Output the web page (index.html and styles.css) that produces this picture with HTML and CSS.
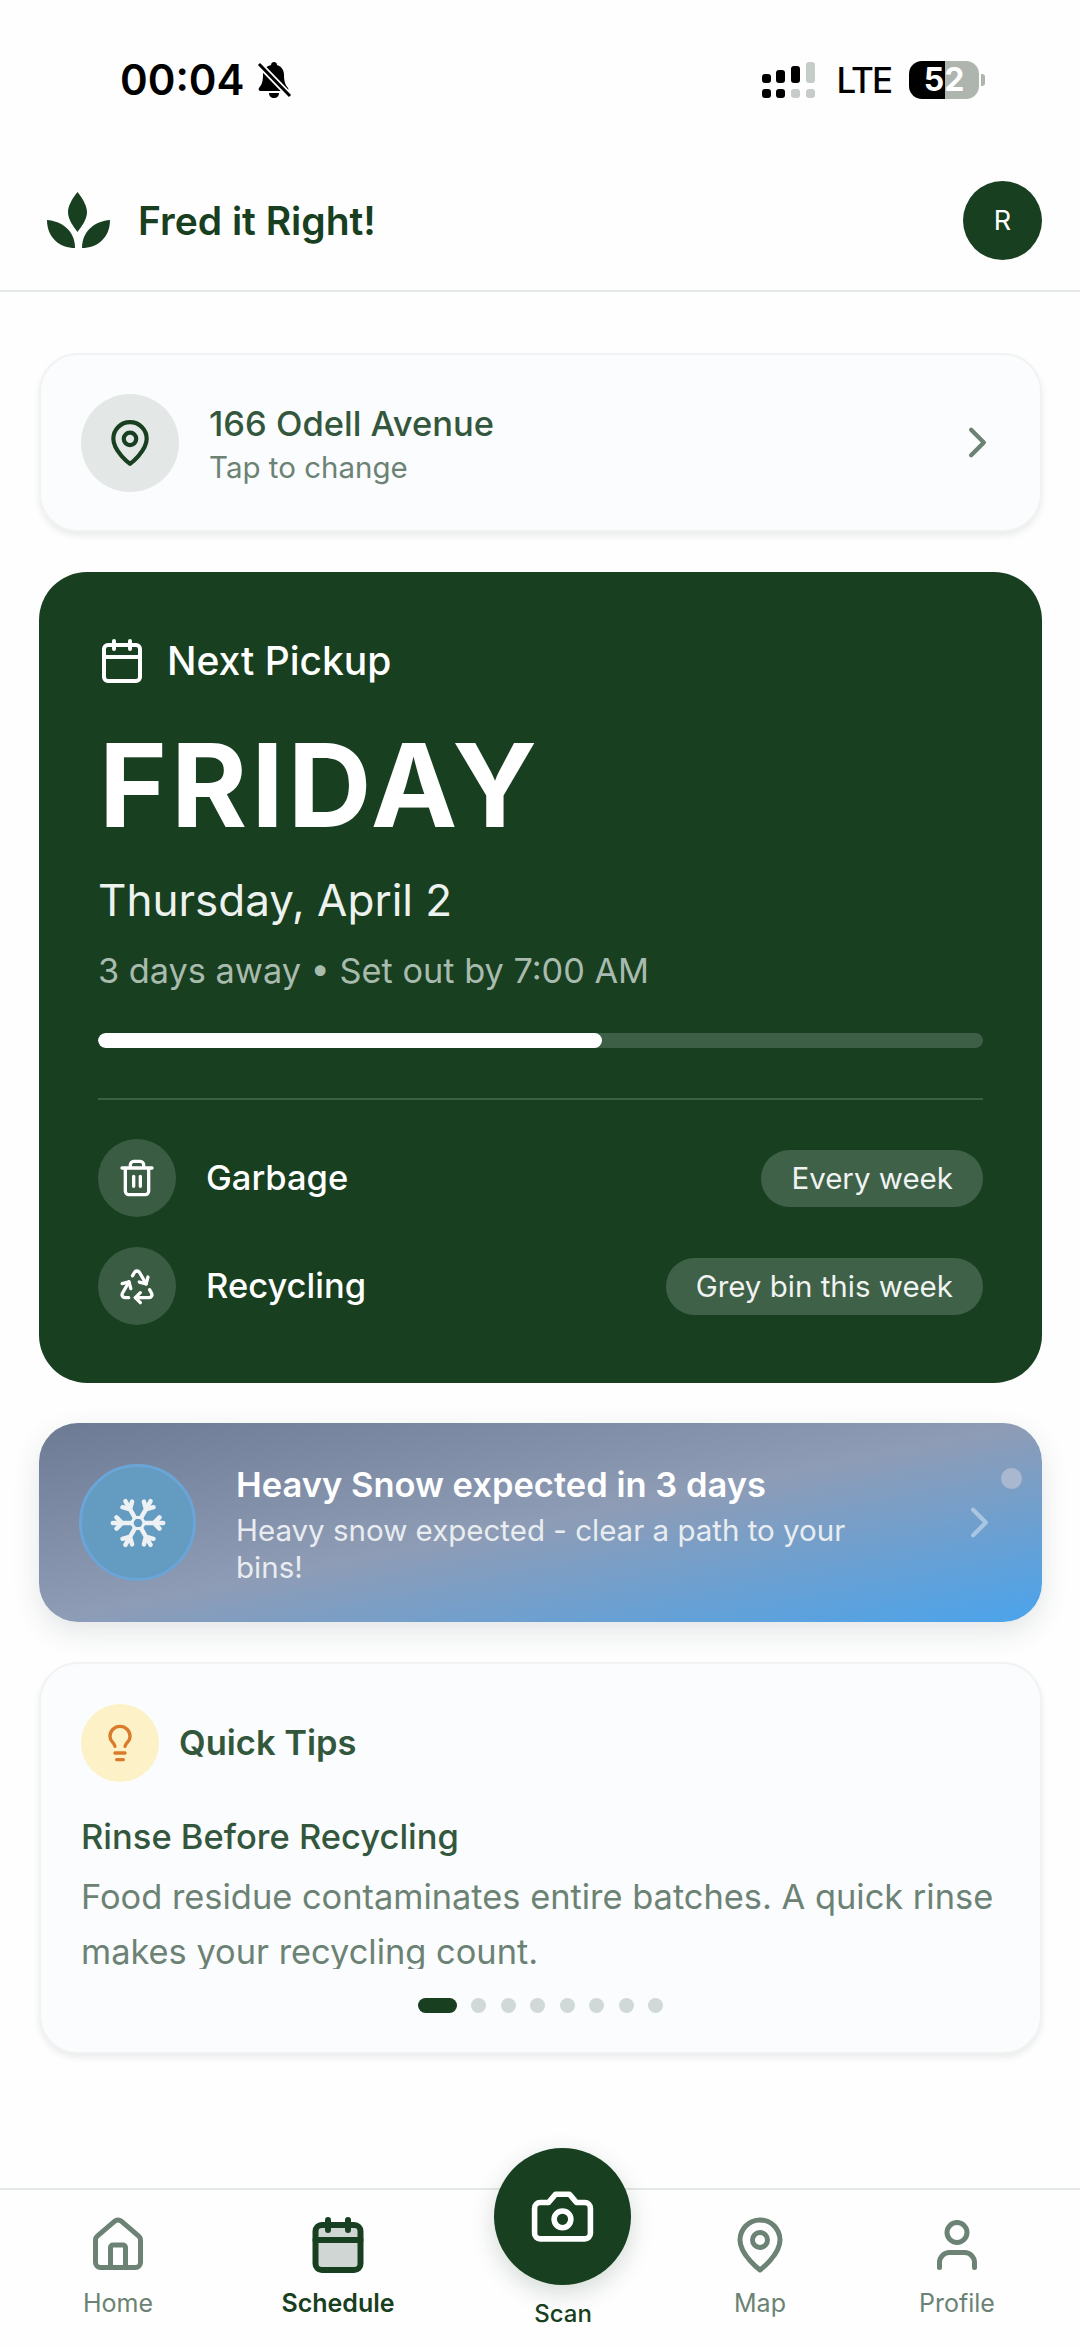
FILE: index.html
```html
<!DOCTYPE html>
<html lang="en">
<head>
<meta charset="utf-8">
<title>Fred it Right!</title>
<link rel="stylesheet" href="styles.css">
</head>
<body>
<div class="app">
  <div class="status">
    <div class="status-left">
      <span class="time">00:04</span>
      <svg class="bell" viewBox="0 0 36 38"><path d="M18 1c2 0 3 1.400 3 3 5 1.500 7 5.500 7 10 0 7 1.500 10 4 13 1 1.500 0 3-1.500 3H4.500C3 30 2 28.500 3 27c2.500-3 4-6 4-13 0-4.500 2-8.500 8-10 0-1.600 1-3 3-3zM13 32h10c0 3-2 5-5 5s-5-2-5-5z" fill="#000"/><path d="M3 3l31 32" stroke="#fff" stroke-width="6.500"/><path d="M3 3l31 32" stroke="#000" stroke-width="3"/></svg>
    </div>
    <div class="status-right">
      <svg class="signal" viewBox="0 0 54 36"><g fill="#000"><rect x="0" y="12" width="9" height="9" rx="3"/><rect x="0" y="27" width="9" height="9" rx="3"/><rect x="14" y="8" width="9" height="13" rx="3"/><rect x="14" y="27" width="9" height="9" rx="3"/><rect x="29" y="4" width="9" height="17" rx="3"/></g><g fill="#c6ccc8"><rect x="29" y="27" width="9" height="9" rx="3"/><rect x="44" y="0" width="9" height="21" rx="3"/><rect x="44" y="27" width="9" height="9" rx="3"/></g></svg>
      <span class="lte">LTE</span>
      <span class="battery">52</span>
      <span class="nib"></span>
    </div>
  </div>

  <header class="header">
    <div class="brand">
      <svg class="logo" viewBox="0 0 66 58"><g fill="#183f20"><path d="M31.500 0C25 8 22 15 22 20c0 8 6 15 9.500 20 3.500-5 9.500-12 9.500-20 0-5-3-12-9.500-20z"/><path d="M1 28c14 1 28 10 28 28C14 56 1 46 1 28z"/><path d="M64 28c-14 1-28 10-28 28 15 0 28-10 28-28z"/></g></svg>
      <span class="brand-name">Fred it Right!</span>
    </div>
    <div class="avatar">R</div>
  </header>

  <main class="main">
    <section class="card location">
      <div class="loc-icon">
        <svg class="i50" viewBox="0 0 24 24"><path d="M20 10c0 6-8 12-8 12s-8-6-8-12a8 8 0 0 1 16 0Z"/><circle cx="12" cy="10" r="3"/></svg>
      </div>
      <div class="loc-text">
        <div class="loc-title">166 Odell Avenue</div>
        <div class="loc-sub">Tap to change</div>
      </div>
      <svg class="chev" viewBox="0 0 24 24"><path d="m9 18 6-6-6-6"/></svg>
    </section>

    <section class="pickup">
      <div class="pickup-head">
        <svg class="i48" viewBox="0 0 24 24"><rect x="3" y="4" width="18" height="18" rx="2"/><path d="M16 2v4M8 2v4M3 10h18"/></svg>
        <span>Next Pickup</span>
      </div>
      <div class="day">FRIDAY</div>
      <div class="date">Thursday, April 2</div>
      <div class="away">3 days away • Set out by 7:00 AM</div>
      <div class="track"><div class="fill" style="width:57%"></div></div>
      <div class="rule"></div>
      <div class="rows">
        <div class="bin">
          <span class="bin-icon"><svg class="i40" viewBox="0 0 24 24"><path d="M3 6h18M19 6v14c0 1-1 2-2 2H7c-1 0-2-1-2-2V6M8 6V4c0-1 1-2 2-2h4c1 0 2 1 2 2v2M10 11v6M14 11v6"/></svg></span>
          <span class="bin-name">Garbage</span>
          <span class="pill">Every week</span>
        </div>
        <div class="bin">
          <span class="bin-icon"><svg class="i40" viewBox="0 0 24 24"><path d="M7 19H4.815a1.830 1.830 0 0 1-1.570-.881 1.785 1.785 0 0 1-.004-1.784L7.196 9.500"/><path d="M11 19h8.203a1.830 1.830 0 0 0 1.556-.890 1.784 1.784 0 0 0 0-1.775l-1.226-2.120"/><path d="m14 16-3 3 3 3"/><path d="M8.293 13.596 7.196 9.500 3.100 10.598"/><path d="m9.344 5.811 1.093-1.892A1.830 1.830 0 0 1 11.985 3a1.784 1.784 0 0 1 1.546.888l3.943 6.843"/><path d="m13.378 9.633 4.096 1.098 1.097-4.096"/></svg></span>
          <span class="bin-name">Recycling</span>
          <span class="pill">Grey bin this week</span>
        </div>
      </div>
    </section>

    <section class="weather">
      <div class="snow-icon">
        <svg class="snowflake" viewBox="-30 -30 60 60">
          <defs><g id="arm"><path d="M7 0H27M17 0l6-6M17 0l6 6"/></g></defs>
          <path class="hex" d="M7 0 3.500 6-3.500 6-7 0-3.500-6 3.500-6Z"/>
          <use href="#arm"/>
          <use href="#arm" transform="rotate(60)"/>
          <use href="#arm" transform="rotate(120)"/>
          <use href="#arm" transform="rotate(180)"/>
          <use href="#arm" transform="rotate(240)"/>
          <use href="#arm" transform="rotate(300)"/>
        </svg>
      </div>
      <div class="weather-text">
        <div class="weather-title">Heavy Snow expected in 3 days</div>
        <div class="weather-sub">Heavy snow expected - clear a path to your bins!</div>
      </div>
      <svg class="chev chev-light" viewBox="0 0 24 24"><path d="m9 18 6-6-6-6"/></svg>
      <span class="weather-dot"></span>
    </section>

    <section class="card tips">
      <div class="tips-head">
        <span class="bulb"><svg class="i40" viewBox="0 0 24 24"><path d="M15 14c.2-1 .7-1.700 1.500-2.500 1-.9 1.500-2.200 1.500-3.500A6 6 0 0 0 6 8c0 1 .2 2.200 1.500 3.500.7.7 1.300 1.500 1.500 2.500M9 18h6M10 22h4"/></svg></span>
        <span class="tips-title">Quick Tips</span>
      </div>
      <div class="tip-name">Rinse Before Recycling</div>
      <div class="tip-clip"><p class="tip-body">Food residue contaminates entire batches. A quick rinse makes your recycling count.</p></div>
      <div class="dots">
        <span class="dot dot-on"></span><span class="dot"></span><span class="dot"></span><span class="dot"></span><span class="dot"></span><span class="dot"></span><span class="dot"></span><span class="dot"></span>
      </div>
    </section>
  </main>

  <nav class="nav">
    <div class="tab">
      <svg class="i60" viewBox="0 0 24 24"><path d="M15 21v-8a1 1 0 0 0-1-1h-4a1 1 0 0 0-1 1v8"/><path d="M3 10a2 2 0 0 1 .709-1.528l7-5.999a2 2 0 0 1 2.582 0l7 5.999A2 2 0 0 1 21 10v9a2 2 0 0 1-2 2H5a2 2 0 0 1-2-2z"/></svg>
      <span>Home</span>
    </div>
    <div class="tab tab-on">
      <svg class="i60 cal-on" viewBox="0 0 24 24"><rect class="cal-fill" x="3" y="4" width="18" height="18" rx="2.500"/><path d="M16 2v4M8 2v4M3 10h18"/></svg>
      <span>Schedule</span>
    </div>
    <div class="tab tab-scan">
      <div class="scan-btn"><svg class="camera" viewBox="0 0 24 24"><path d="M14.500 4h-5L7 7H4a2 2 0 0 0-2 2v9a2 2 0 0 0 2 2h16a2 2 0 0 0 2-2V9a2 2 0 0 0-2-2h-3l-2.500-3z"/><circle cx="12" cy="13" r="3"/></svg></div>
      <span>Scan</span>
    </div>
    <div class="tab">
      <svg class="i60" viewBox="0 0 24 24"><path d="M20 10c0 6-8 12-8 12s-8-6-8-12a8 8 0 0 1 16 0Z"/><circle cx="12" cy="10" r="3"/></svg>
      <span>Map</span>
    </div>
    <div class="tab">
      <svg class="i60" viewBox="0 0 24 24"><path d="M19 21v-2a4 4 0 0 0-4-4H9a4 4 0 0 0-4 4v2"/><circle cx="12" cy="7" r="4"/></svg>
      <span>Profile</span>
    </div>
  </nav>
</div>
</body>
</html>
```
FILE: styles.css
```css
* { box-sizing: border-box; }
html, body { margin: 0; padding: 0; }
body { background: #fefefe; font-family: Inter, "Liberation Sans", sans-serif; color: #2f5238; }
svg { display: block; fill: none; stroke: currentColor; stroke-width: 2; stroke-linecap: round; stroke-linejoin: round; flex: none; }
.app { width: 1080px; height: 2347px; display: flex; flex-direction: column; overflow: hidden; }

.status { height: 165px; padding: 58px 95px 0 120px; display: flex; justify-content: space-between; align-items: flex-start; color: #000; }
.status-left { display: flex; align-items: center; gap: 12px; height: 44px; }
.time { font-size: 42px; font-weight: 600; line-height: 44px; }
.bell { width: 36px; height: 38px; stroke: none; }
.bell path { stroke-linecap: butt; }
.status-right { display: flex; align-items: center; height: 44px; }
.signal { width: 54px; height: 36px; stroke: none; margin-right: 21px; }
.lte { font-size: 35px; font-weight: 500; line-height: 44px; letter-spacing: -2px; margin-right: 18px; }
.battery { width: 70px; height: 38px; border-radius: 13px; background: linear-gradient(90deg, #000 0 36px, #adb5ae 36px); color: #fff; font-size: 32px; font-weight: 700; line-height: 38px; text-align: center; }
.nib { width: 4px; height: 12px; margin-left: 2px; border-radius: 0 3px 3px 0; background: #adb5ae; }

.header { height: 127px; padding: 0 38px 14px 46px; border-bottom: 2px solid #e4e8e6; display: flex; align-items: center; justify-content: space-between; }
.brand { display: flex; align-items: center; gap: 26px; }
.logo { width: 66px; height: 58px; stroke: none; }
.brand-name { font-size: 39px; font-weight: 600; color: #183f20; line-height: 46px; }
.avatar { width: 79px; height: 79px; border-radius: 50%; background: #183f20; color: #fff; font-size: 27px; display: flex; align-items: center; justify-content: center; }

.main { flex: 1; padding: 61px 38px 0 39px; display: flex; flex-direction: column; gap: 40px; }
.card { background: #fbfcfd; border: 2px solid #f1f3f3; box-shadow: 0 4px 6px rgba(30, 50, 40, .09); border-radius: 39px; }

.location { height: 179px; padding: 0 37px 0 40px; display: flex; align-items: center; }
.loc-icon { width: 98px; height: 98px; border-radius: 50%; background: #e3e7e6; color: #183f20; display: flex; align-items: center; justify-content: center; margin-right: 30px; }
.i50 { width: 50px; height: 50px; }
.i48 { width: 48px; height: 48px; }
.i40 { width: 40px; height: 40px; }
.i60 { width: 60px; height: 60px; }
.loc-text { flex: 1; padding-top: 2px; }
.loc-title { font-size: 34.500px; font-weight: 500; line-height: 44px; color: #33573c; }
.loc-sub { font-size: 29.500px; line-height: 38px; color: #6b8274; margin-top: 2px; }
.chev { width: 51px; height: 51px; color: #6b8274; }

.pickup { height: 811px; padding: 65px 59px 0 60px; background: #183f20; border-radius: 48px; color: #fff; }
.pickup-head { display: flex; align-items: center; gap: 21px; font-size: 39px; font-weight: 500; line-height: 48px; }
.pickup-head .i48 { margin-left: -1px; }
.day { font-size: 116px; font-weight: 700; line-height: 138px; letter-spacing: 4px; margin-top: 31px; }
.date { font-size: 44px; line-height: 50px; margin: 21px 0 0 -1px; color: #eef2ef; }
.away { font-size: 34.300px; line-height: 44px; margin: 24px 0 0 -1px; color: #a9bbae; }
.track { height: 15px; margin: 40px 0 0 -1px; background: #3c5f45; border-radius: 8px; overflow: hidden; }
.fill { height: 100%; background: #fff; border-radius: 8px; }
.rule { height: 2px; margin: 50px 0 0 -1px; background: #3c5f45; }
.rows { margin: 39px 0 0 -1px; display: flex; flex-direction: column; gap: 30px; }
.bin { display: flex; align-items: center; height: 78px; }
.bin-icon { width: 78px; height: 78px; border-radius: 50%; background: #3a5c43; display: flex; align-items: center; justify-content: center; margin-right: 30px; }
.bin-name { flex: 1; font-size: 34.500px; font-weight: 500; line-height: 44px; }
.pill { height: 57px; padding: 0 30px; border-radius: 29px; background: #3e6148; font-size: 29.500px; line-height: 57px; color: #f0f3f1; }

.weather { position: relative; height: 199px; padding: 0 37px 0 40px; display: flex; align-items: center; border-radius: 39px; background: linear-gradient(to bottom right, #6c7a93 0%, #8e9cb6 50%, #4fa3e8 96%); box-shadow: 0 10px 28px rgba(30, 50, 60, .12); color: #fff; }
.snow-icon { width: 117px; height: 117px; border-radius: 50%; background: #639bc1; border: 3px solid #6ba5d8; display: flex; align-items: center; justify-content: center; margin-right: 40px; flex: none; }
.snowflake { width: 56px; height: 56px; color: #eef1f3; stroke-width: 4.800; }
.snowflake .hex { stroke-width: 3.200; }
.weather-text { flex: 1; padding: 4px 72px 0 0; }
.weather-title { font-size: 34.500px; font-weight: 600; line-height: 42px; }
.weather-sub { font-size: 29.500px; line-height: 37px; color: #e9edf0; margin-top: 6px; }
.chev-light { color: rgba(255, 255, 255, .4); width: 51px; height: 51px; }
.weather-dot { position: absolute; right: 20px; top: 45px; width: 21px; height: 21px; border-radius: 50%; background: #a9b8cf; }

.tips { height: 392px; padding: 40px 40px 0; }
.tips-head { display: flex; align-items: center; gap: 20px; }
.bulb { width: 78px; height: 78px; border-radius: 50%; background: #fdf1c7; color: #d97b28; display: flex; align-items: center; justify-content: center; }
.tips-title { font-size: 34.500px; font-weight: 600; line-height: 44px; color: #33573c; }
.tip-name { font-size: 34.500px; font-weight: 500; line-height: 44px; margin-top: 33px; color: #33573c; }
.tip-clip { height: 100px; margin-top: 10px; overflow: hidden; }
.tip-body { margin: 0; font-size: 34.400px; line-height: 55px; color: #6b8274; }
.dots { display: flex; justify-content: center; gap: 14.500px; margin-top: 29px; }
.dot { width: 15px; height: 15px; border-radius: 50%; background: #d0d8d8; }
.dot-on { width: 39px; border-radius: 8px; background: #183f20; }

.nav { height: 159px; border-top: 2px solid #e4e8e6; display: grid; grid-template-columns: 236px 204px 246px 148px 246px; color: #6b8274; }
.tab { position: relative; display: flex; flex-direction: column; align-items: center; padding-top: 25px; font-size: 25px; line-height: 34px; }
.tab span { margin-top: 11px; }
.tab-on { color: #183f20; font-weight: 600; }
.cal-on { stroke-width: 2.400; }
.cal-fill { fill: #cfd6d3; }
.tab-scan { color: #183f20; font-weight: 500; font-size: 24px; padding-top: 96px; }
.scan-btn { position: absolute; top: -42px; left: 54px; width: 137px; height: 137px; border-radius: 50%; background: #183f20; color: #fff; display: flex; align-items: center; justify-content: center; box-shadow: 0 8px 24px rgba(24, 63, 32, .18); }
.camera { width: 67px; height: 67px; }
```
